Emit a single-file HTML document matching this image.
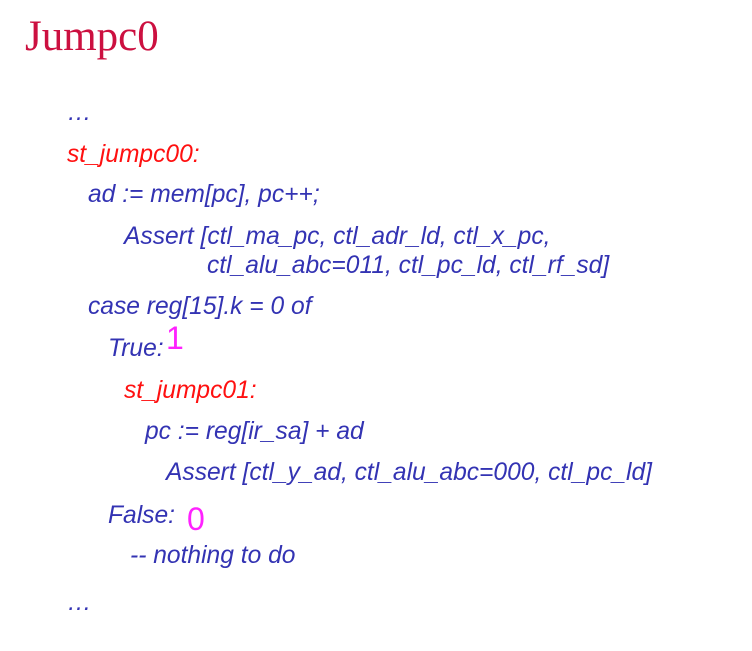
<!DOCTYPE html>
<html><head><meta charset="utf-8"><style>
html,body{margin:0;padding:0;background:#fff;width:752px;height:651px;overflow:hidden;position:relative}
.t{position:absolute;left:25px;top:12px;font-family:"Liberation Serif",serif;font-size:43px;color:#cc1040;line-height:normal;white-space:nowrap}
.l{position:absolute;font-family:"Liberation Sans",sans-serif;font-style:italic;font-size:24.6px;color:#3333b3;line-height:normal;white-space:nowrap}
.r{color:#ff1010}
.m{position:absolute;font-family:"Liberation Sans",sans-serif;font-size:32px;color:#ff22ff;line-height:normal}
</style></head><body>
<div class="t">Jumpc0</div>
<div class="l" style="left:67px;top:99px">…</div>
<div class="l r" style="left:67px;top:141px">st_jumpc00:</div>
<div class="l" style="left:88px;top:181px">ad := mem[pc], pc++;</div>
<div class="l" style="left:124px;top:223px">Assert [ctl_ma_pc, ctl_adr_ld, ctl_x_pc,</div>
<div class="l" style="left:207px;top:252px">ctl_alu_abc=011, ctl_pc_ld, ctl_rf_sd]</div>
<div class="l" style="left:88px;top:293px">case reg[15].k = 0 of</div>
<div class="l" style="left:108px;top:335px">True:</div>
<div class="m" style="left:166px;top:320px">1</div>
<div class="l r" style="left:124px;top:377px">st_jumpc01:</div>
<div class="l" style="left:145px;top:418px">pc := reg[ir_sa] + ad</div>
<div class="l" style="left:166px;top:459px">Assert [ctl_y_ad, ctl_alu_abc=000, ctl_pc_ld]</div>
<div class="l" style="left:108px;top:502px">False:</div>
<div class="m" style="left:187px;top:501px">0</div>
<div class="l" style="left:130px;top:542px">-- nothing to do</div>
<div class="l" style="left:67px;top:589px">…</div>
</body></html>
